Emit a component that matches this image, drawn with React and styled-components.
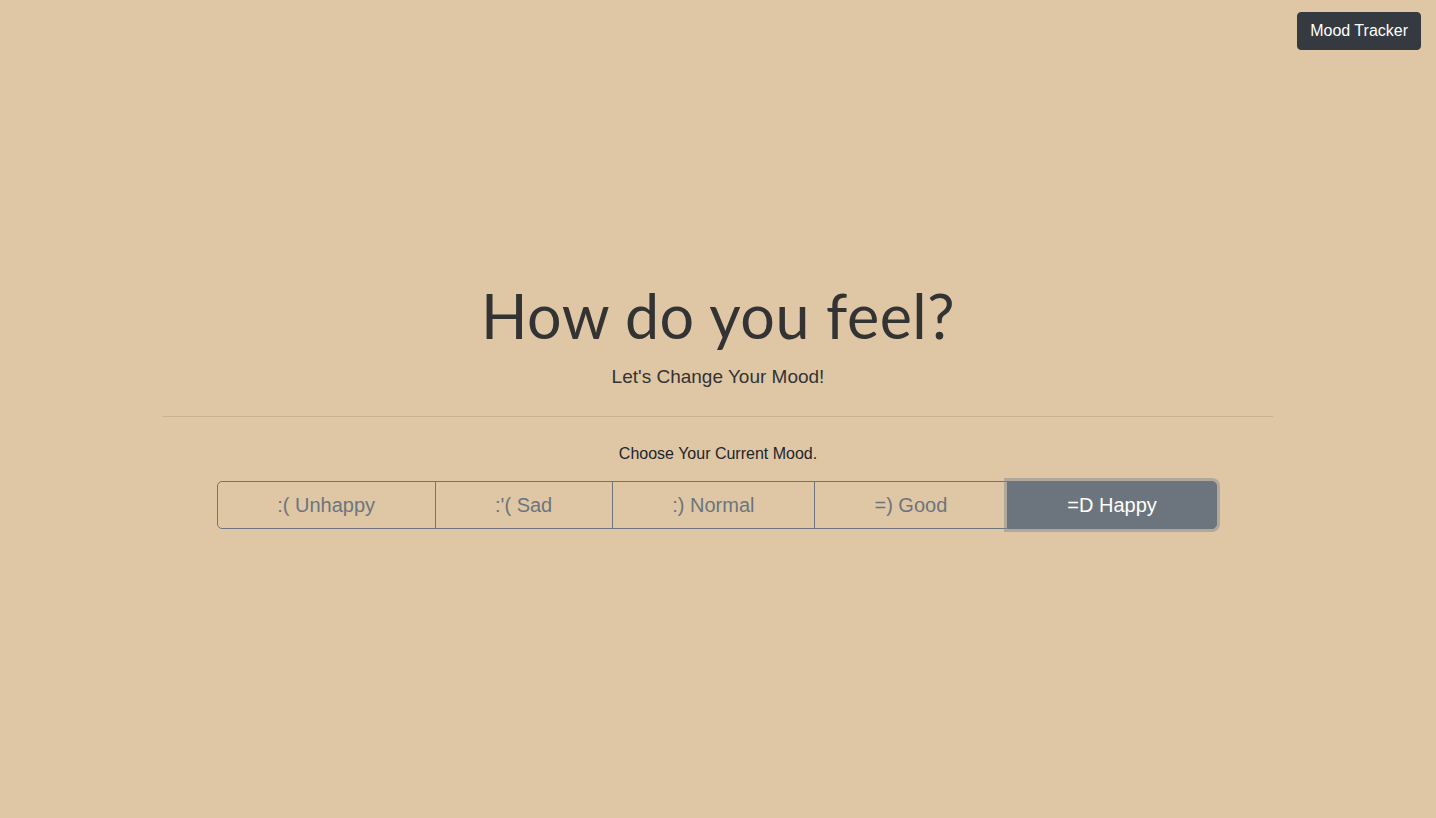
import React, { useState } from 'react';
import styled, { createGlobalStyle } from 'styled-components';

const BG = '#dfc7a5';
const SECONDARY = '#6c757d';

const GlobalStyle = createGlobalStyle`
  html, body {
    margin: 0;
    padding: 0;
    background: ${BG};
    font-family: "Liberation Sans", Arial, sans-serif;
    color: #212529;
  }
  * { box-sizing: border-box; }
`;

const NavButton = styled.button`
  position: fixed;
  top: 12px;
  right: 15px;
  height: 38px;
  padding: 0 12px;
  border: 1px solid #343a40;
  border-radius: 4px;
  background: #343a40;
  color: #fff;
  font-family: "Liberation Sans", Arial, sans-serif;
  font-size: 16px;
  cursor: pointer;
`;

const Page = styled.main`
  min-height: 100vh;
  padding-bottom: 10px;
  display: flex;
  align-items: center;
  justify-content: center;
`;

const Container = styled.div`
  width: 100%;
  max-width: 1140px;
  padding: 0 15px;
  text-align: center;
`;

const Title = styled.h1`
  margin: 0;
  font-family: "Lato", sans-serif;
  font-weight: 400;
  font-size: 61px;
  line-height: 1.2;
  color: #333;
  letter-spacing: 0.5px;
`;

const Lead = styled.p`
  margin: 14px 0 0;
  font-size: 19px;
  font-weight: 300;
  color: #333;
`;

const Divider = styled.hr`
  margin: 28px 0 28px;
  border: 0;
  border-top: 1px solid rgba(0, 0, 0, 0.1);
`;

const Prompt = styled.p`
  margin: 0 0 18px;
  font-size: 16px;
  color: #212529;
`;

const Group = styled.div`
  display: inline-flex;
  margin-left: -2px;
`;

const MoodButton = styled.button`
  height: 48px;
  padding: 0 59.5px;
  font-family: "Liberation Sans", Arial, sans-serif;
  font-size: 20px;
  line-height: 1.5;
  background: ${p => (p.$active ? SECONDARY : 'transparent')};
  color: ${p => (p.$active ? '#fff' : SECONDARY)};
  border: 1px solid ${SECONDARY};
  border-radius: 0;
  margin-left: -1px;
  cursor: pointer;
  position: relative;
  z-index: ${p => (p.$active ? 1 : 0)};
  box-shadow: ${p => (p.$active ? '0 0 0 3px rgba(130, 138, 145, 0.5)' : 'none')};

  &:first-child {
    margin-left: 0;
    border-radius: 5px 0 0 5px;
  }
  &:last-child {
    border-radius: 0 5px 5px 0;
  }
`;

const moods = [':( Unhappy', ":'( Sad", ':) Normal', '=) Good', '=D Happy'];

export default function App() {
  const [mood, setMood] = useState(4);
  return (
    <>
      <GlobalStyle />
      <NavButton>Mood Tracker</NavButton>
      <Page>
        <Container>
          <Title>How do you feel?</Title>
          <Lead>Let's Change Your Mood!</Lead>
          <Divider />
          <Prompt>Choose Your Current Mood.</Prompt>
          <Group>
            {moods.map((m, i) => (
              <MoodButton key={m} $active={i === mood} onClick={() => setMood(i)}>
                {m}
              </MoodButton>
            ))}
          </Group>
        </Container>
      </Page>
    </>
  );
}
